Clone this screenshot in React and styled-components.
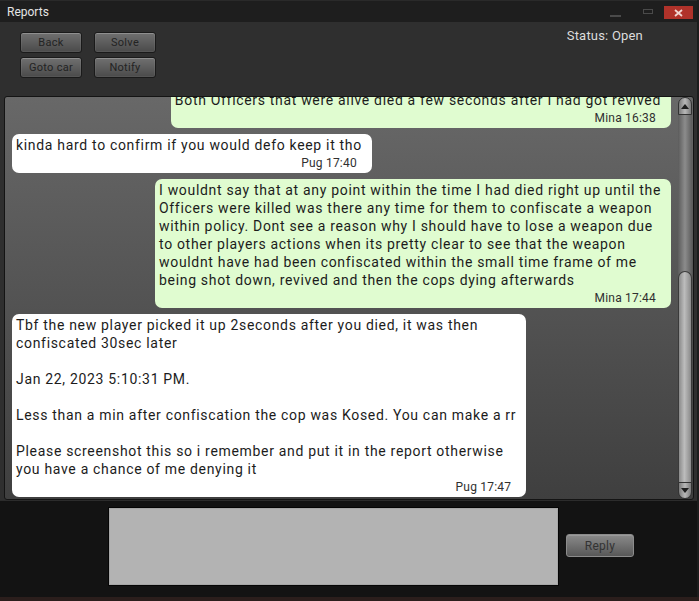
import React from "react";
import styled, { createGlobalStyle } from "styled-components";

const GlobalStyle = createGlobalStyle`
  html, body {
    margin: 0;
    padding: 0;
    background: #2b1e1c;
  }
  body {
    font-family: Roboto, "Liberation Sans", sans-serif;
  }
`;

const Window = styled.div`
  width: 699px;
  height: 597px;
  display: flex;
  flex-direction: column;
  background: #2f2f2f;
  box-sizing: border-box;
  border-right: 2px solid #1c1c1c;
`;

const TitleBar = styled.div`
  height: 22px;
  flex: none;
  display: flex;
  align-items: center;
  justify-content: space-between;
  padding: 0 4px 0 7px;
  background: #1e1e1e;
  border-top: 1px solid #2a2a2a;
  box-sizing: border-box;
`;

const Title = styled.span`
  color: #e4e4e4;
  font-size: 12px;
`;

const WindowControls = styled.div`
  display: flex;
  align-items: center;
  height: 100%;
  padding-top: 2px;
  box-sizing: border-box;
`;

const WinButton = styled.div`
  width: ${p => p.$w}px;
  height: 13px;
  margin-left: ${p => p.$gap || 0}px;
  display: flex;
  align-items: center;
  justify-content: center;
  background: ${p => (p.$close ? "#b0322a" : "transparent")};
`;

const MinGlyph = styled.div`
  width: 11px;
  height: 2px;
  margin-top: 6px;
  background: #4a4a4a;
`;

const MaxGlyph = styled.div`
  width: 8px;
  height: 3px;
  margin-top: -3px;
  border: 1px solid #4a4a4a;
`;

const Header = styled.div`
  height: 74px;
  flex: none;
  display: flex;
  justify-content: space-between;
  padding: 10px 54px 0 20px;
  box-sizing: border-box;
`;

const ButtonGrid = styled.div`
  display: grid;
  grid-template-columns: 62px 62px;
  grid-auto-rows: 21px;
  column-gap: 12px;
  row-gap: 4px;
`;

const ActionButton = styled.button`
  height: ${p => p.$h || 21}px;
  width: ${p => p.$w || 62}px;
  padding: 0;
  border: 1px solid #1a1a1a;
  border-radius: 3px;
  background: linear-gradient(#707070, #4a4a4a);
  box-shadow: inset 0 1px 0 rgba(255, 255, 255, 0.18),
    inset 0 0 0 1px rgba(255, 255, 255, 0.06);
  color: #232323;
  font-family: Roboto, "Liberation Sans", sans-serif;
  font-size: 11px;
  letter-spacing: 0.3px;
`;

const ReplyButton = styled(ActionButton)`
  margin-top: 27px;
  border: 1px solid #8c8c8c;
  background: linear-gradient(#8a8a8a, #585858);
  box-shadow: inset 0 1px 0 rgba(255, 255, 255, 0.15);
  color: #333;
  font-size: 12px;
`;

const Status = styled.div`
  color: #dcdcdc;
  font-size: 13px;
  letter-spacing: 0.2px;
  margin-top: -4px;
`;

const ChatPanel = styled.div`
  height: 404px;
  flex: none;
  margin: 0 3px 0 4px;
  display: flex;
  border: 1px solid #141414;
  border-radius: 3px;
  background: linear-gradient(#686868, #3f3f3f);
  box-sizing: border-box;
`;

const Messages = styled.div`
  flex: 1;
  overflow: hidden;
  display: flex;
  flex-direction: column;
  justify-content: flex-end;
  gap: 6px;
  padding: 0 7px 2px 7px;
`;

const Bubble = styled.div`
  align-self: ${p => (p.$mine ? "flex-end" : "flex-start")};
  background: ${p => (p.$mine ? "#e0fcd0" : "#ffffff")};
  border-radius: 7px;
  padding: 2px 10px 1px 4px;
  color: #1c1c1c;
  font-size: 14px;
  line-height: 18px;
  letter-spacing: 0.68px;
`;

const Line = styled.div`
  white-space: pre;
  min-height: 18px;
`;

const Time = styled.div`
  text-align: right;
  font-size: 12px;
  line-height: 18px;
  letter-spacing: 0.2px;
  color: #303030;
  padding-right: 5px;
`;

const ScrollBar = styled.div`
  width: 14px;
  flex: none;
  display: flex;
  flex-direction: column;
  margin-right: 1px;
`;

const ScrollCap = styled.div`
  height: ${p => p.$h}px;
  flex: none;
  display: flex;
  align-items: center;
  justify-content: center;
  border-radius: ${p => (p.$up ? "7px 7px 0 0" : "0 0 7px 7px")};
  background: linear-gradient(90deg, #7a7a7a, #b8b8b8 50%, #7a7a7a);
  border: 1px solid #333;
  box-sizing: border-box;
`;

const Track = styled.div`
  flex: 1;
  display: flex;
  flex-direction: column;
  justify-content: flex-end;
  background: linear-gradient(90deg, #5c5c5c, #8c8c8c 50%, #5c5c5c);
`;

const Thumb = styled.div`
  height: 211px;
  border-radius: 7px 7px 0 0;
  border: 1px solid #3a3a3a;
  border-bottom: none;
  background: linear-gradient(90deg, #8a8a8a, #bdbdbd 45%, #8a8a8a);
  box-sizing: border-box;
`;

const Footer = styled.div`
  flex: 1;
  display: flex;
  gap: 7px;
  padding: 6px 0 0 108px;
  background: #131313;
  border-top: 1px solid #2c2c2c;
  box-sizing: border-box;
`;

const ReplyInput = styled.div`
  width: 451px;
  height: 79px;
  background: #b3b3b3;
  border: 1px solid #050505;
  box-shadow: inset 0 0 0 1px #a6a6a6;
  box-sizing: border-box;
`;

const messages = [
  {
    mine: true,
    lines: ["Both Officers that were alive died a few seconds after I had got revived"],
    time: "Mina 16:38",
  },
  {
    mine: false,
    lines: ["kinda hard to confirm if you would defo keep it tho"],
    time: "Pug 17:40",
  },
  {
    mine: true,
    lines: [
      "I wouldnt say that at any point within the time I had died right up until the",
      "Officers were killed was there any time for them to confiscate a weapon",
      "within policy. Dont see a reason why I should have to lose a weapon due",
      "to other players actions when its pretty clear to see that the weapon",
      "wouldnt have had been confiscated within the small time frame of me",
      "being shot down, revived and then the cops dying afterwards",
    ],
    time: "Mina 17:44",
  },
  {
    mine: false,
    lines: [
      "Tbf the new player picked it up 2seconds after you died, it was then",
      "confiscated 30sec later",
      "",
      "Jan 22, 2023 5:10:31 PM.",
      "",
      "Less than a min after confiscation the cop was Kosed. You can make a rr",
      "",
      "Please screenshot this so i remember and put it in the report otherwise",
      "you have a chance of me denying it",
    ],
    time: "Pug 17:47",
  },
];

const Arrow = ({ up }) => (
  <svg width="8" height="5" viewBox="0 0 8 5">
    <path d={up ? "M0 5 L4 0 L8 5 Z" : "M0 0 L4 5 L8 0 Z"} fill="#1e1e1e" />
  </svg>
);

export default function App() {
  return (
    <>
      <GlobalStyle />
      <Window>
        <TitleBar>
          <Title>Reports</Title>
          <WindowControls>
            <WinButton $w={11}>
              <MinGlyph />
            </WinButton>
            <WinButton $w={10} $gap={22}>
              <MaxGlyph />
            </WinButton>
            <WinButton $w={29} $gap={11} $close>
              <svg width="9" height="8" viewBox="0 0 9 8">
                <path d="M1 1 L8 7 M8 1 L1 7" stroke="#f2d6d2" strokeWidth="1.8" />
              </svg>
            </WinButton>
          </WindowControls>
        </TitleBar>
        <Header>
          <ButtonGrid>
            <ActionButton>Back</ActionButton>
            <ActionButton>Solve</ActionButton>
            <ActionButton>Goto car</ActionButton>
            <ActionButton>Notify</ActionButton>
          </ButtonGrid>
          <Status>Status: Open</Status>
        </Header>
        <ChatPanel>
          <Messages>
            {messages.map((m, i) => (
              <Bubble key={i} $mine={m.mine}>
                {m.lines.map((l, j) => (
                  <Line key={j}>{l}</Line>
                ))}
                <Time>{m.time}</Time>
              </Bubble>
            ))}
          </Messages>
          <ScrollBar>
            <ScrollCap $up $h={18}>
              <Arrow up />
            </ScrollCap>
            <Track>
              <Thumb />
            </Track>
            <ScrollCap $h={17}>
              <Arrow />
            </ScrollCap>
          </ScrollBar>
        </ChatPanel>
        <Footer>
          <ReplyInput />
          <ReplyButton $w={68} $h={23}>
            Reply
          </ReplyButton>
        </Footer>
      </Window>
    </>
  );
}
